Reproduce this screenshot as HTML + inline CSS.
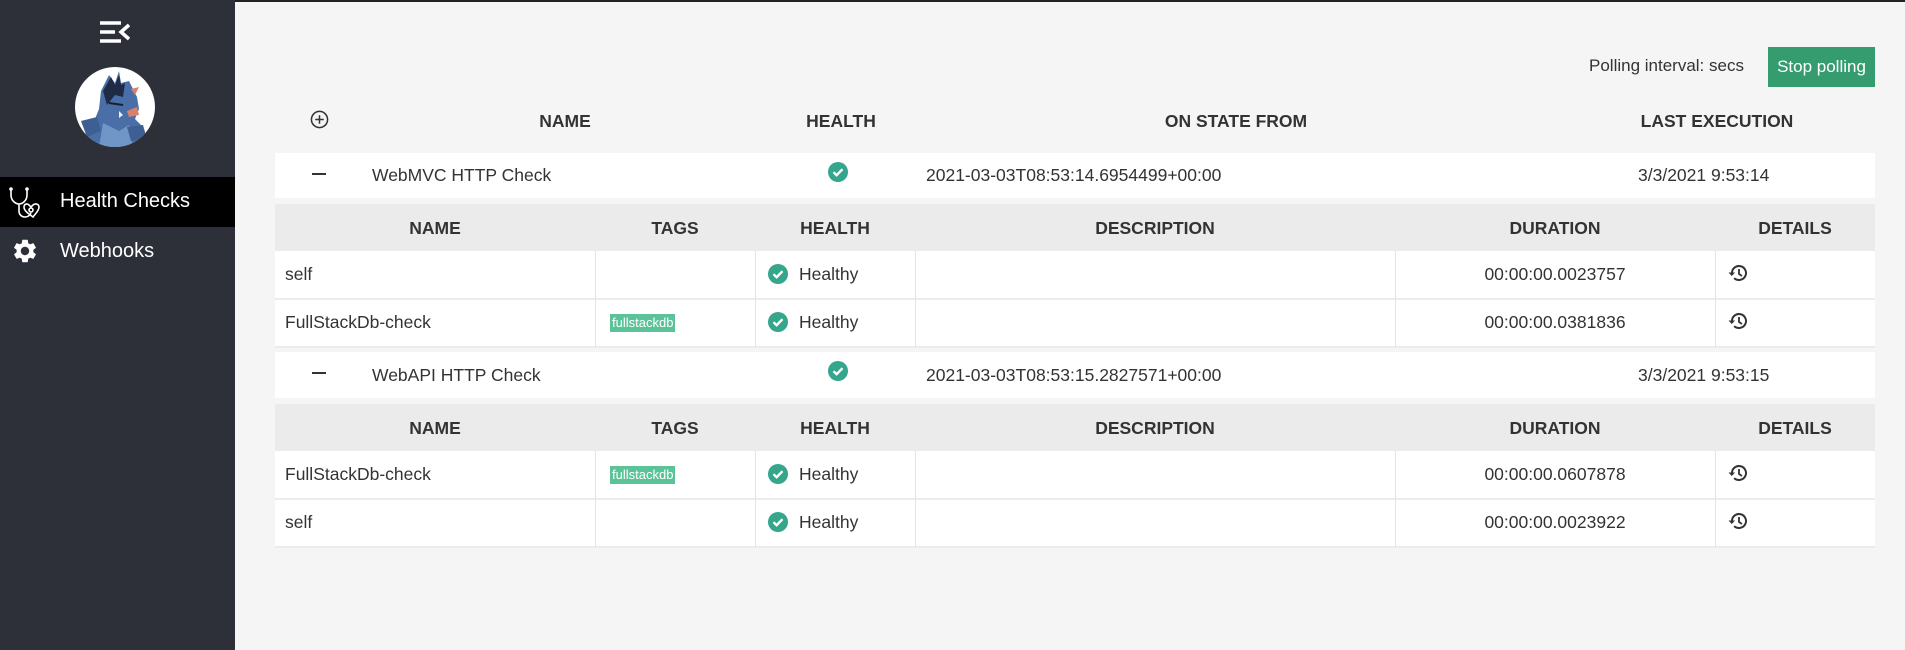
<!DOCTYPE html>
<html><head><meta charset="utf-8"><style>
*{margin:0;padding:0;box-sizing:border-box}
body{width:1905px;height:650px;overflow:hidden;background:#f5f5f5;font-family:"Liberation Sans",Arial,sans-serif;color:#333;position:relative}
.a{position:absolute}
#sb{left:0;top:0;width:235px;height:650px;background:#2d2f39}
.topline{left:0;top:0;width:1905px;height:2px;background:#222}
.hdr{font-weight:bold;font-size:17.5px;color:#333;transform:translateX(-50%);white-space:nowrap}
.row{left:275px;width:1600px;background:#fff}
.sub{left:275px;width:1600px;background:#ebebeb}
.cell{font-size:17.5px;white-space:nowrap}
.dur{left:1395px;width:320px;text-align:center}
.vl{width:1px;background:#e4e4e4}
.hl{height:2px;background:#ececec;left:275px;width:1600px}
.tag{background:#5cc398;color:#fff;font-size:13px;padding:1px 2px;height:18px;line-height:16px}
</style></head><body>
<div class="a topline"></div>
<div class="a" id="sb"></div>
<svg class="a" style="left:100px;top:21px" width="30" height="22" viewBox="0 0 30 22"><g stroke="#fff" stroke-width="3.5" fill="none"><path d="M0 2H21M0 11H15M0 20H21"/><path d="M29 4L21 11L29 18"/></g></svg>
<svg class="a" style="left:75px;top:67px" width="80" height="80" viewBox="0 0 80 80">
<defs><clipPath id="c"><circle cx="40" cy="40" r="40"/></clipPath></defs>
<circle cx="40" cy="40" r="40" fill="#fff"/>
<g clip-path="url(#c)">
<path d="M26 24L34 8L40 16L44 4L46 16L54 14L62 30L64 42L60 52L68 60L66 80L12 80L10 58L20 52L24 42Z" fill="#4a6fa8"/>
<path d="M28 24L36 10L40 18L44 8L46 18L50 16L48 30L40 28L32 38Z" fill="#1f2a44"/>
<path d="M28 56L44 64L54 58L58 80L24 80Z" fill="#6f96c6"/>
<path d="M6 54L22 50L26 64L12 70Z" fill="#3e5f94"/>
<path d="M52 60L68 58L72 72L56 74Z" fill="#3e5f94"/>
<path d="M52 44L62 40L64 48L54 50Z" fill="#d9826a"/>
<path d="M44 44L48 48L44 51Z" fill="#eee"/>
<path d="M34 36L48 38" stroke="#1a1f2e" stroke-width="2"/>
<path d="M56 22L64 20L60 28Z" fill="#d9826a"/>
</g></svg>
<div class="a" style="left:0;top:177px;width:235px;height:50px;background:#000"></div>
<svg class="a" style="left:9px;top:187px" width="32" height="32" viewBox="0 0 32 32" fill="none" stroke="#fff" stroke-width="1.6"><path d="M2 2V8C2 14 7 17 10 17C13 17 18 14 18 8V2"/><circle cx="2" cy="2" r="1" fill="#fff"/><circle cx="18" cy="2" r="1" fill="#fff"/><path d="M10 17V24C10 28 13 30 16 30C19 30 21 28 22 26"/><path d="M24 30C20 27 15 24 15 20C15 17 18 16 20 18L22 20L24 18C26 16 30 17 30 20C30 24 26 27 24 30Z"/><circle cx="22" cy="23" r="2"/></svg>
<div class="a" style="left:60px;top:190px;color:#fff;font-size:20px">Health Checks</div>
<svg class="a" style="left:11px;top:237px" width="28" height="28" viewBox="0 0 24 24"><path fill="#fff" d="M19.14 12.94c.04-.3.06-.61.06-.94s-.02-.64-.07-.94l2.030-1.58a.49.49 0 0 0 .12-.61l-1.92-3.32a.488.488 0 0 0-.59-.22l-2.39.96c-.5-.38-1.03-.7-1.620-.94l-.36-2.54a.484.484 0 0 0-.48-.41h-3.84c-.24 0-.43.17-.47.41l-.36 2.54c-.59.24-1.13.57-1.62.94l-2.39-.96c-.22-.08-.47 0-.59.22L2.74 8.87c-.12.21-.08.47.12.61l2.03 1.58c-.05.3-.09.63-.09.94s.02.64.07.94l-2.03 1.58a.49.49 0 0 0-.12.61l1.92 3.32c.12.22.37.29.59.22l2.39-.96c.5.38 1.03.7 1.62.94l.36 2.54c.05.24.24.41.48.41h3.84c.24 0 .44-.17.47-.41l.36-2.54c.59-.24 1.13-.56 1.62-.94l2.39.96c.22.08.47 0 .59-.22l1.92-3.32c.12-.22.07-.47-.12-.61l-2.01-1.58zM12 15.6c-1.98 0-3.6-1.62-3.6-3.6s1.62-3.6 3.6-3.6 3.6 1.62 3.6 3.6-1.62 3.6-3.6 3.6z"/></svg>
<div class="a" style="left:60px;top:240px;color:#fff;font-size:20px">Webhooks</div>

<div class="a" style="left:1589px;top:56px;font-size:17px">Polling interval: secs</div>
<div class="a" style="left:1768px;top:47px;width:107px;height:40px;background:#359c70;color:#fff;font-size:17px;line-height:40px;text-align:center">Stop polling</div>

<svg class="a" style="left:310px;top:110px" width="19" height="19" viewBox="0 0 20 20" fill="none" stroke="#333" stroke-width="1.6"><circle cx="10" cy="10" r="8.5"/><path d="M10 5.5V14.5M5.5 10H14.5"/></svg>
<div class="a hdr" style="left:565px;top:111px">NAME</div>
<div class="a hdr" style="left:841px;top:111px">HEALTH</div>
<div class="a hdr" style="left:1236px;top:111px">ON STATE FROM</div>
<div class="a hdr" style="left:1717px;top:111px">LAST EXECUTION</div>

<svg width="0" height="0" style="position:absolute"><defs>
<g id="ok"><circle cx="10" cy="10" r="10" fill="#35a58b"/><path d="M5.5 10.2L8.6 13.2L14.5 7.2" stroke="#fff" stroke-width="2.4" fill="none"/></g>
<g id="hist"><path d="M4 10A7 7 0 1 1 6.2 15.1" stroke="#333" stroke-width="2" fill="none"/><path d="M0.5 9.5H7L3.8 13Z" fill="#333"/><path d="M11 6V11L14 13" stroke="#333" stroke-width="1.8" fill="none"/></g>
</defs></svg>

<div class="a row" style="top:153px;height:45px"></div>
<div class="a" style="left:312px;top:173px;width:14px;height:2px;background:#333"></div>
<div class="a cell" style="left:372px;top:165px">WebMVC HTTP Check</div>
<svg class="a" style="left:828px;top:162px" width="20" height="20"><use href="#ok"/></svg>
<div class="a cell" style="left:926px;top:165px">2021-03-03T08:53:14.6954499+00:00</div>
<div class="a cell" style="left:1638px;top:165px">3/3/2021 9:53:14</div>

<div class="a sub" style="top:204px;height:47px"></div>
<div class="a hdr" style="left:435px;top:218px">NAME</div>
<div class="a hdr" style="left:675px;top:218px">TAGS</div>
<div class="a hdr" style="left:835px;top:218px">HEALTH</div>
<div class="a hdr" style="left:1155px;top:218px">DESCRIPTION</div>
<div class="a hdr" style="left:1555px;top:218px">DURATION</div>
<div class="a hdr" style="left:1795px;top:218px">DETAILS</div>

<div class="a row" style="top:251px;height:96px"></div>
<div class="a hl" style="top:298px"></div>
<div class="a hl" style="top:346px"></div>
<div class="a vl" style="left:595px;top:251px;height:96px"></div>
<div class="a vl" style="left:755px;top:251px;height:96px"></div>
<div class="a vl" style="left:915px;top:251px;height:96px"></div>
<div class="a vl" style="left:1395px;top:251px;height:96px"></div>
<div class="a vl" style="left:1715px;top:251px;height:96px"></div>

<div class="a cell" style="left:285px;top:264px">self</div>
<svg class="a" style="left:768px;top:264px" width="20" height="20"><use href="#ok"/></svg>
<div class="a cell" style="left:799px;top:264px">Healthy</div>
<div class="a cell dur" style="top:264px">00:00:00.0023757</div>
<svg class="a" style="left:1728px;top:263px" width="20" height="20"><use href="#hist"/></svg>

<div class="a cell" style="left:285px;top:312px">FullStackDb-check</div>
<div class="a tag" style="left:610px;top:314px">fullstackdb</div>
<svg class="a" style="left:768px;top:312px" width="20" height="20"><use href="#ok"/></svg>
<div class="a cell" style="left:799px;top:312px">Healthy</div>
<div class="a cell dur" style="top:312px">00:00:00.0381836</div>
<svg class="a" style="left:1728px;top:311px" width="20" height="20"><use href="#hist"/></svg>

<div class="a row" style="top:352px;height:46px"></div>
<div class="a" style="left:312px;top:372px;width:14px;height:2px;background:#333"></div>
<div class="a cell" style="left:372px;top:365px">WebAPI HTTP Check</div>
<svg class="a" style="left:828px;top:361px" width="20" height="20"><use href="#ok"/></svg>
<div class="a cell" style="left:926px;top:365px">2021-03-03T08:53:15.2827571+00:00</div>
<div class="a cell" style="left:1638px;top:365px">3/3/2021 9:53:15</div>

<div class="a sub" style="top:404px;height:47px"></div>
<div class="a hdr" style="left:435px;top:418px">NAME</div>
<div class="a hdr" style="left:675px;top:418px">TAGS</div>
<div class="a hdr" style="left:835px;top:418px">HEALTH</div>
<div class="a hdr" style="left:1155px;top:418px">DESCRIPTION</div>
<div class="a hdr" style="left:1555px;top:418px">DURATION</div>
<div class="a hdr" style="left:1795px;top:418px">DETAILS</div>

<div class="a row" style="top:451px;height:96px"></div>
<div class="a hl" style="top:498px"></div>
<div class="a hl" style="top:546px"></div>
<div class="a vl" style="left:595px;top:451px;height:96px"></div>
<div class="a vl" style="left:755px;top:451px;height:96px"></div>
<div class="a vl" style="left:915px;top:451px;height:96px"></div>
<div class="a vl" style="left:1395px;top:451px;height:96px"></div>
<div class="a vl" style="left:1715px;top:451px;height:96px"></div>

<div class="a cell" style="left:285px;top:464px">FullStackDb-check</div>
<div class="a tag" style="left:610px;top:466px">fullstackdb</div>
<svg class="a" style="left:768px;top:464px" width="20" height="20"><use href="#ok"/></svg>
<div class="a cell" style="left:799px;top:464px">Healthy</div>
<div class="a cell dur" style="top:464px">00:00:00.0607878</div>
<svg class="a" style="left:1728px;top:463px" width="20" height="20"><use href="#hist"/></svg>

<div class="a cell" style="left:285px;top:512px">self</div>
<svg class="a" style="left:768px;top:512px" width="20" height="20"><use href="#ok"/></svg>
<div class="a cell" style="left:799px;top:512px">Healthy</div>
<div class="a cell dur" style="top:512px">00:00:00.0023922</div>
<svg class="a" style="left:1728px;top:511px" width="20" height="20"><use href="#hist"/></svg>
</body></html>
